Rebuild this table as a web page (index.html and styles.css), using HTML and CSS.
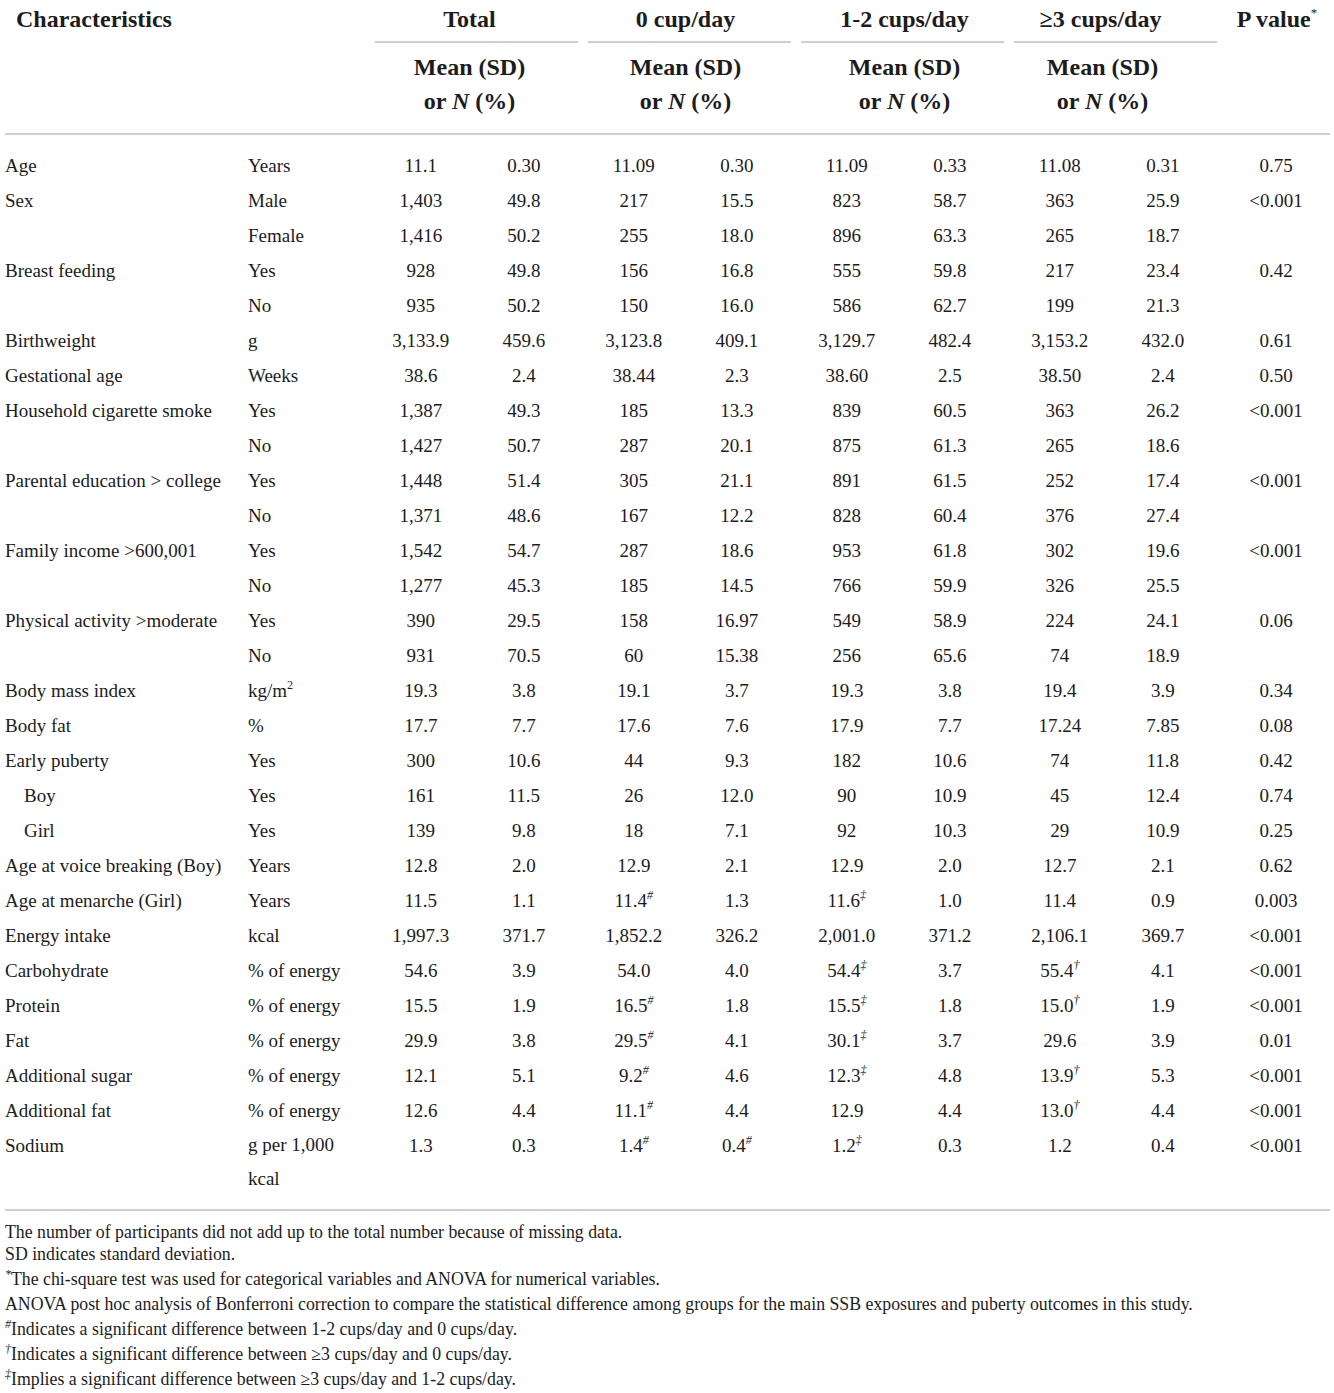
FILE: index.html
```html
<!DOCTYPE html>
<html lang="en">
<head>
<meta charset="utf-8">
<title>Characteristics table</title>
<link rel="stylesheet" href="styles.css">
</head>
<body>
<div class="page">
<table class="tbl">
  <colgroup>
    <col class="c-char"><col class="c-unit">
    <col class="c-d"><col class="c-d"><col class="c-d"><col class="c-d">
    <col class="c-d"><col class="c-d"><col class="c-d"><col class="c-d">
    <col class="c-p">
  </colgroup>
  <thead>
    <tr class="h1">
      <th colspan="2" class="h-char">Characteristics</th>
      <th colspan="2" class="grp"><div class="grp-t g-total">Total</div></th>
      <th colspan="2" class="grp"><div class="grp-t g-zero">0 cup/day</div></th>
      <th colspan="2" class="grp"><div class="grp-t g-one">1-2 cups/day</div></th>
      <th colspan="2" class="grp"><div class="grp-t g-three">≥3 cups/day</div></th>
      <th class="h-p">P value<sup class="ast">*</sup></th>
    </tr>
    <tr class="h2">
      <th colspan="2"></th>
      <th colspan="2" class="sub g-total">Mean (SD)<br>or <i>N</i> (%)</th>
      <th colspan="2" class="sub g-zero">Mean (SD)<br>or <i>N</i> (%)</th>
      <th colspan="2" class="sub g-one">Mean (SD)<br>or <i>N</i> (%)</th>
      <th colspan="2" class="sub g-three2">Mean (SD)<br>or <i>N</i> (%)</th>
      <th></th>
    </tr>
  </thead>
  <tbody>
    <tr class="first"><td>Age</td><td>Years</td><td>11.1</td><td>0.30</td><td>11.09</td><td>0.30</td><td>11.09</td><td>0.33</td><td>11.08</td><td>0.31</td><td>0.75</td></tr>
    <tr><td>Sex</td><td>Male</td><td>1,403</td><td>49.8</td><td>217</td><td>15.5</td><td>823</td><td>58.7</td><td>363</td><td>25.9</td><td>&lt;0.001</td></tr>
    <tr><td></td><td>Female</td><td>1,416</td><td>50.2</td><td>255</td><td>18.0</td><td>896</td><td>63.3</td><td>265</td><td>18.7</td><td></td></tr>
    <tr><td>Breast feeding</td><td>Yes</td><td>928</td><td>49.8</td><td>156</td><td>16.8</td><td>555</td><td>59.8</td><td>217</td><td>23.4</td><td>0.42</td></tr>
    <tr><td></td><td>No</td><td>935</td><td>50.2</td><td>150</td><td>16.0</td><td>586</td><td>62.7</td><td>199</td><td>21.3</td><td></td></tr>
    <tr><td>Birthweight</td><td>g</td><td>3,133.9</td><td>459.6</td><td>3,123.8</td><td>409.1</td><td>3,129.7</td><td>482.4</td><td>3,153.2</td><td>432.0</td><td>0.61</td></tr>
    <tr><td>Gestational age</td><td>Weeks</td><td>38.6</td><td>2.4</td><td>38.44</td><td>2.3</td><td>38.60</td><td>2.5</td><td>38.50</td><td>2.4</td><td>0.50</td></tr>
    <tr><td>Household cigarette smoke</td><td>Yes</td><td>1,387</td><td>49.3</td><td>185</td><td>13.3</td><td>839</td><td>60.5</td><td>363</td><td>26.2</td><td>&lt;0.001</td></tr>
    <tr><td></td><td>No</td><td>1,427</td><td>50.7</td><td>287</td><td>20.1</td><td>875</td><td>61.3</td><td>265</td><td>18.6</td><td></td></tr>
    <tr><td>Parental education &gt; college</td><td>Yes</td><td>1,448</td><td>51.4</td><td>305</td><td>21.1</td><td>891</td><td>61.5</td><td>252</td><td>17.4</td><td>&lt;0.001</td></tr>
    <tr><td></td><td>No</td><td>1,371</td><td>48.6</td><td>167</td><td>12.2</td><td>828</td><td>60.4</td><td>376</td><td>27.4</td><td></td></tr>
    <tr><td>Family income &gt;600,001</td><td>Yes</td><td>1,542</td><td>54.7</td><td>287</td><td>18.6</td><td>953</td><td>61.8</td><td>302</td><td>19.6</td><td>&lt;0.001</td></tr>
    <tr><td></td><td>No</td><td>1,277</td><td>45.3</td><td>185</td><td>14.5</td><td>766</td><td>59.9</td><td>326</td><td>25.5</td><td></td></tr>
    <tr><td>Physical activity &gt;moderate</td><td>Yes</td><td>390</td><td>29.5</td><td>158</td><td>16.97</td><td>549</td><td>58.9</td><td>224</td><td>24.1</td><td>0.06</td></tr>
    <tr><td></td><td>No</td><td>931</td><td>70.5</td><td>60</td><td>15.38</td><td>256</td><td>65.6</td><td>74</td><td>18.9</td><td></td></tr>
    <tr><td>Body mass index</td><td>kg/m<sup>2</sup></td><td>19.3</td><td>3.8</td><td>19.1</td><td>3.7</td><td>19.3</td><td>3.8</td><td>19.4</td><td>3.9</td><td>0.34</td></tr>
    <tr><td>Body fat</td><td>%</td><td>17.7</td><td>7.7</td><td>17.6</td><td>7.6</td><td>17.9</td><td>7.7</td><td>17.24</td><td>7.85</td><td>0.08</td></tr>
    <tr><td>Early puberty</td><td>Yes</td><td>300</td><td>10.6</td><td>44</td><td>9.3</td><td>182</td><td>10.6</td><td>74</td><td>11.8</td><td>0.42</td></tr>
    <tr><td class="ind">Boy</td><td>Yes</td><td>161</td><td>11.5</td><td>26</td><td>12.0</td><td>90</td><td>10.9</td><td>45</td><td>12.4</td><td>0.74</td></tr>
    <tr><td class="ind">Girl</td><td>Yes</td><td>139</td><td>9.8</td><td>18</td><td>7.1</td><td>92</td><td>10.3</td><td>29</td><td>10.9</td><td>0.25</td></tr>
    <tr><td>Age at voice breaking (Boy)</td><td>Years</td><td>12.8</td><td>2.0</td><td>12.9</td><td>2.1</td><td>12.9</td><td>2.0</td><td>12.7</td><td>2.1</td><td>0.62</td></tr>
    <tr><td>Age at menarche (Girl)</td><td>Years</td><td>11.5</td><td>1.1</td><td>11.4<sup class="m">#</sup></td><td>1.3</td><td>11.6<sup class="m">‡</sup></td><td>1.0</td><td>11.4</td><td>0.9</td><td>0.003</td></tr>
    <tr><td>Energy intake</td><td>kcal</td><td>1,997.3</td><td>371.7</td><td>1,852.2</td><td>326.2</td><td>2,001.0</td><td>371.2</td><td>2,106.1</td><td>369.7</td><td>&lt;0.001</td></tr>
    <tr><td>Carbohydrate</td><td>% of energy</td><td>54.6</td><td>3.9</td><td>54.0</td><td>4.0</td><td>54.4<sup class="m">‡</sup></td><td>3.7</td><td>55.4<sup class="m">†</sup></td><td>4.1</td><td>&lt;0.001</td></tr>
    <tr><td>Protein</td><td>% of energy</td><td>15.5</td><td>1.9</td><td>16.5<sup class="m">#</sup></td><td>1.8</td><td>15.5<sup class="m">‡</sup></td><td>1.8</td><td>15.0<sup class="m">†</sup></td><td>1.9</td><td>&lt;0.001</td></tr>
    <tr><td>Fat</td><td>% of energy</td><td>29.9</td><td>3.8</td><td>29.5<sup class="m">#</sup></td><td>4.1</td><td>30.1<sup class="m">‡</sup></td><td>3.7</td><td>29.6</td><td>3.9</td><td>0.01</td></tr>
    <tr><td>Additional sugar</td><td>% of energy</td><td>12.1</td><td>5.1</td><td>9.2<sup class="m">#</sup></td><td>4.6</td><td>12.3<sup class="m">‡</sup></td><td>4.8</td><td>13.9<sup class="m">†</sup></td><td>5.3</td><td>&lt;0.001</td></tr>
    <tr><td>Additional fat</td><td>% of energy</td><td>12.6</td><td>4.4</td><td>11.1<sup class="m">#</sup></td><td>4.4</td><td>12.9</td><td>4.4</td><td>13.0<sup class="m">†</sup></td><td>4.4</td><td>&lt;0.001</td></tr>
    <tr class="last"><td>Sodium</td><td>g per 1,000 kcal</td><td>1.3</td><td>0.3</td><td>1.4<sup class="m">#</sup></td><td>0.4<sup class="m">#</sup></td><td>1.2<sup class="m">‡</sup></td><td>0.3</td><td>1.2</td><td>0.4</td><td>&lt;0.001</td></tr>
  </tbody>
</table>
<div class="notes">
  <p class="fn">The number of participants did not add up to the total number because of missing data.</p>
  <p class="fn">SD indicates standard deviation.</p>
  <p class="fn s s1"><sup class="fm">*</sup>The chi-square test was used for categorical variables and ANOVA for numerical variables.</p>
  <p class="fn s">ANOVA post hoc analysis of Bonferroni correction to compare the statistical difference among groups for the main SSB exposures and puberty outcomes in this study.</p>
  <p class="fn s"><sup class="fm">#</sup>Indicates a significant difference between 1-2 cups/day and 0 cups/day.</p>
  <p class="fn s"><sup class="fm">†</sup>Indicates a significant difference between ≥3 cups/day and 0 cups/day.</p>
  <p class="fn s"><sup class="fm">‡</sup>Implies a significant difference between ≥3 cups/day and 1-2 cups/day.</p>
</div>
</div>
</body>
</html>
```

FILE: styles.css
```css
html, body {
  margin: 0;
  padding: 0;
  background: #ffffff;
}
body {
  font-family: "Liberation Serif", "Times New Roman", serif;
  color: #1c1c1c;
}
.page {
  padding-left: 5px;
  width: 1325px;
}
.tbl {
  border-collapse: collapse;
  table-layout: fixed;
  width: 1325px;
  font-size: 19px;
}
.c-char { width: 243px; }
.c-unit { width: 122px; }
.c-d { width: 106.5px; }
.c-p { width: 108px; }

thead th {
  font-weight: bold;
  font-size: 24px;
  padding: 0;
  vertical-align: top;
}
.h1 th {
  padding-top: 4px;
  line-height: 30px;
}
.h-char {
  text-align: left;
  padding-left: 11px !important;
}
.h-p {
  text-align: center;
  padding-left: 2px;
}
.ast {
  font-size: 13px;
  line-height: 0;
  vertical-align: 10px;
  font-weight: normal;
}
.grp {
  padding-left: 5px !important;
  padding-right: 5px !important;
}
.grp-t {
  border-bottom: 2px solid #cfcfcf;
  padding-bottom: 7px;
  text-align: center;
}
.g-total { padding-right: 14px; }
.g-zero { padding-right: 8px; }
.g-one { padding-left: 4px; }
.g-three { padding-right: 30px; }
.g-three2 { padding-right: 26px; }
.h2 th {
  line-height: 34px;
  padding-top: 7px;
  padding-bottom: 15px;
  text-align: center;
  border-bottom: 2px solid #cfcfcf;
}

tbody td {
  padding: 0;
  line-height: 35px;
  vertical-align: top;
  text-align: center;
}
tbody td:nth-child(1),
tbody td:nth-child(2) {
  text-align: left;
}
tbody td:nth-child(3),
tbody td:nth-child(5),
tbody td:nth-child(7),
tbody td:nth-child(9) {
  padding-right: 5px;
}
tbody td:nth-child(4),
tbody td:nth-child(6),
tbody td:nth-child(8),
tbody td:nth-child(10) {
  padding-right: 12px;
}
tbody td.ind {
  padding-left: 19px;
}
tbody tr.first td {
  padding-top: 13px;
}
tbody tr.last td {
  padding-bottom: 13px;
  border-bottom: 2px solid #cfcfcf;
}
tbody tr.last td:nth-child(2) {
  line-height: 34px;
}
tbody td:nth-child(2) {
  padding-right: 14px;
}
sup {
  line-height: 0;
  font-size: 12px;
  vertical-align: 8px;
}
sup.m {
  font-style: italic;
}

.notes {
  padding-top: 10px;
  font-size: 17.8px;
}
.fn {
  margin: 0;
  line-height: 22px;
}
.fn.s {
  line-height: 25px;
}
.fn.s1 {
  padding-top: 2px;
}
.fm {
  font-size: 12px;
  vertical-align: 7px;
  font-style: italic;
}
```
